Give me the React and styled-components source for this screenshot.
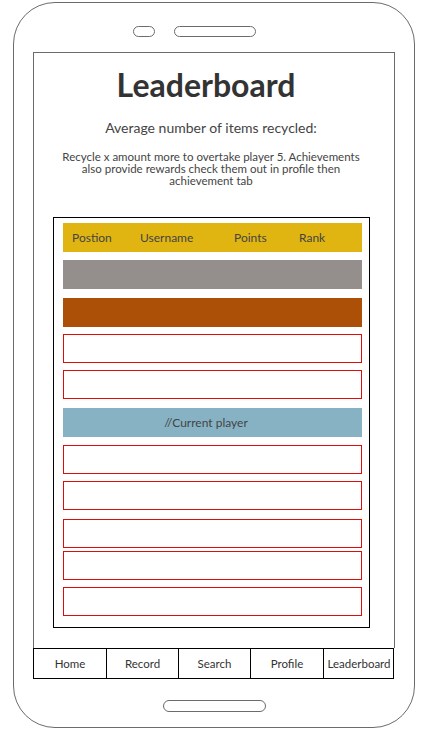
import React from "react";
import styled, { createGlobalStyle } from "styled-components";

const GlobalStyle = createGlobalStyle`
  body {
    margin: 0;
    background: #fff;
    font-family: "Lato", "Liberation Sans", sans-serif;
  }
`;

const Phone = styled.div`
  box-sizing: border-box;
  width: 402px;
  height: 726px;
  margin: 2px 0 0 13px;
  border: 1px solid #6b6b6b;
  border-radius: 42px;
  display: flex;
  flex-direction: column;
`;

const TopBar = styled.div`
  display: flex;
  gap: 19px;
  padding: 23px 0 0 119px;
  height: 11px;
`;

const Pill = styled.div`
  box-sizing: border-box;
  width: ${(p) => p.$w}px;
  height: 11px;
  border: 1px solid #6b6b6b;
  border-radius: 6px;
`;

const Screen = styled.div`
  box-sizing: border-box;
  width: 362px;
  height: 596px;
  margin: 15px 0 0 19px;
  border: 1px solid #6b6b6b;
  border-bottom: none;
  display: flex;
  flex-direction: column;
  align-items: center;
  padding-right: 6px;
  color: #444;
`;

const Title = styled.h1`
  margin: 14px 0 0 0;
  padding-right: 10px;
  font-size: 32px;
  font-weight: 700;
  color: #333;
  line-height: 36px;
`;

const Subtitle = styled.p`
  margin: 16px 0 0 0;
  font-size: 14px;
  line-height: 18px;
`;

const Note = styled.p`
  margin: 14px 0 0 0;
  width: 306px;
  text-align: center;
  font-size: 11.5px;
  line-height: 12px;
`;

const Table = styled.div`
  box-sizing: border-box;
  align-self: flex-start;
  width: 317px;
  height: 411px;
  margin: 30px 0 0 19px;
  border: 1px solid #000;
  padding: 5px 0 0 9px;
  display: flex;
  flex-direction: column;
`;

const Row = styled.div`
  box-sizing: border-box;
  width: 299px;
  height: 29px;
  flex-shrink: 0;
  margin-top: ${(p) => p.$mt || 0}px;
  background: ${(p) => p.$bg || "transparent"};
  border: ${(p) => (p.$outline ? "1px solid #e00c0c" : "none")};
  font-size: 12px;
  color: #444;
`;

const HeaderRow = styled(Row)`
  display: grid;
  grid-template-columns: 68px 94px 65px auto;
  align-items: center;
  padding-left: 9px;
`;

const LabelRow = styled(Row)`
  display: flex;
  align-items: center;
  justify-content: center;
  padding-right: 13px;
`;

const Nav = styled.nav`
  box-sizing: border-box;
  width: 361px;
  height: 31px;
  margin-left: 19px;
  border: 1px solid #000;
  border-left: none;
  display: grid;
  grid-template-columns: 73px 72px 72px 73px 71px;
`;

const NavItem = styled.div`
  border-left: 1px solid #000;
  display: flex;
  align-items: center;
  justify-content: center;
  font-size: 11.5px;
  color: #333;
`;

const HomeButton = styled.div`
  box-sizing: border-box;
  width: 103px;
  height: 12px;
  margin: 21px 0 0 149px;
  border: 1px solid #6b6b6b;
  border-radius: 6px;
`;

const rows = [
  { mt: 8, bg: "#948f8d" },
  { mt: 9, bg: "#ab5006" },
  { mt: 7, outline: true },
  { mt: 7, outline: true },
  { mt: 9, bg: "#86b2c3", label: "//Current player" },
  { mt: 8, outline: true },
  { mt: 7, outline: true },
  { mt: 9, outline: true },
  { mt: 3, outline: true },
  { mt: 7, outline: true },
];

const navItems = ["Home", "Record", "Search", "Profile", "Leaderboard"];

export default function App() {
  return (
    <>
      <GlobalStyle />
      <Phone>
        <TopBar>
          <Pill $w={22} />
          <Pill $w={82} />
        </TopBar>
        <Screen>
          <Title>Leaderboard</Title>
          <Subtitle>Average number of items recycled:</Subtitle>
          <Note>
            Recycle x amount more to overtake player 5. Achievements also
            provide rewards check them out in profile then achievement tab
          </Note>
          <Table>
            <HeaderRow $bg="#e0b512">
              <span>Postion</span>
              <span>Username</span>
              <span>Points</span>
              <span>Rank</span>
            </HeaderRow>
            {rows.map((r, i) =>
              r.label ? (
                <LabelRow key={i} $mt={r.mt} $bg={r.bg}>
                  {r.label}
                </LabelRow>
              ) : (
                <Row key={i} $mt={r.mt} $bg={r.bg} $outline={r.outline} />
              )
            )}
          </Table>
        </Screen>
        <Nav>
          {navItems.map((n) => (
            <NavItem key={n}>{n}</NavItem>
          ))}
        </Nav>
        <HomeButton />
      </Phone>
    </>
  );
}
